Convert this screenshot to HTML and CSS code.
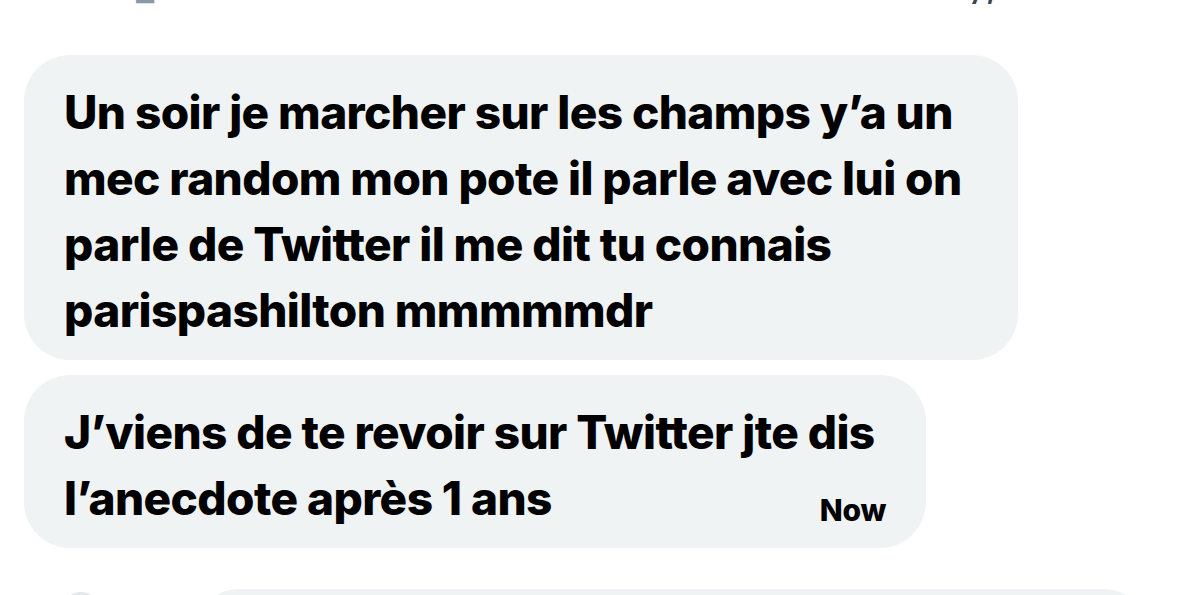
FILE: index.html
```
<!DOCTYPE html>
<html lang="fr">
<head>
    <meta charset="UTF-8">
    <meta name="viewport" content="width=device-width, initial-scale=1.0">
    <title>Messages</title>
    <link rel="stylesheet" href="styles.css">
</head>
<body>
    <div class="thread">
        <div class="prev-line">
            <span class="prev-handle">_</span>
            <span class="prev-date">y,</span>
        </div>

        <div class="bubble bubble-wide">
            <p class="text">Un soir je marcher sur les champs y’a un<br>mec random mon pote il parle avec lui on<br>parle de Twitter il me dit tu connais<br>parispashilton mmmmmdr</p>
        </div>
        <div class="bubble bubble-last">
            <p class="text">J’viens de te revoir sur Twitter jte dis<br>l’anecdote après 1 ans</p>
            <span class="time">Now</span>
        </div>

        <div class="next-row">
            <div class="avatar"></div>
            <div class="bubble bubble-next"></div>
        </div>
    </div>
</body>
</html>
```

FILE: styles.css
```
* {
    padding: 0;
    margin: 0;
    box-sizing: border-box;
}
body {
    background: #fff;
    font-family: Inter, "Noto Sans", sans-serif;
    color: #000;
    overflow: hidden;
}
.thread {
    padding-left: 24px;
    display: flex;
    flex-direction: column;
}
.prev-line {
    height: 4px;
    overflow: hidden;
    display: flex;
    font-size: 40px;
    line-height: 40px;
}
.prev-line span {
    margin-top: -34px;
}
.prev-handle {
    color: #8b98a5;
    margin-left: 112px;
}
.prev-date {
    color: #3c4650;
    margin-left: 810px;
}
.bubble {
    background: #eff3f4;
    border-radius: 46px;
    position: relative;
}
.bubble-wide {
    width: 994px;
    margin-top: 51px;
    padding: 24px 0 17px 40px;
}
.bubble-last {
    width: 902px;
    margin-top: 15px;
    padding: 24px 0 17px 40px;
}
.text {
    font-size: 46px;
    font-weight: 800;
    line-height: 66px;
    letter-spacing: -0.6px;
}
.time {
    position: absolute;
    right: 40px;
    bottom: 23px;
    font-size: 30px;
    font-weight: 800;
    line-height: 30px;
    letter-spacing: -0.3px;
}
.next-row {
    display: flex;
    align-items: flex-start;
    margin-top: 41px;
}
.avatar {
    width: 38px;
    height: 38px;
    border-radius: 50%;
    background: #e4e8ea;
    margin: 3px 0 0 38px;
}
.bubble-next {
    width: 947px;
    height: 80px;
    margin-left: 98px;
}
```
